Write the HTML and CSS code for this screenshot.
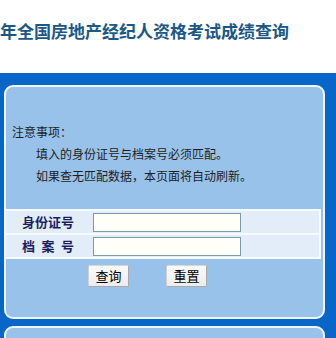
FILE: index.html
```html
<!DOCTYPE html>
<html lang="zh-CN">
<head>
<meta charset="utf-8">
<title>成绩查询</title>
<link rel="stylesheet" href="styles.css">
</head>
<body>
<h1 class="title">年全国房地产经纪人资格考试成绩查询</h1>
<div class="frame">
  <div class="panel">
    <div class="notice">
      <p>注意事项：</p>
      <p class="indent">填入的身份证号与档案号必须匹配。</p>
      <p class="indent">如果查无匹配数据，本页面将自动刷新。</p>
    </div>
    <div class="form">
      <div class="row">
        <div class="label"><span class="label-text">身份证号</span></div>
        <div class="field"><input class="input" type="text"></div>
      </div>
      <div class="row">
        <div class="label"><span class="label-text">档 案 号</span></div>
        <div class="field"><input class="input" type="text"></div>
      </div>
    </div>
    <div class="actions">
      <button class="btn" type="button">查询</button>
      <button class="btn" type="button">重置</button>
    </div>
  </div>
  <div class="panel panel-next"></div>
</div>
</body>
</html>
```
FILE: styles.css
```css
html, body {
  margin: 0;
  padding: 0;
  background: #ffffff;
  overflow: hidden;
}
body {
  width: 336px;
  height: 338px;
  font-family: "Noto Sans CJK SC", sans-serif;
}
.title {
  margin: 0;
  height: 73px;
  box-sizing: border-box;
  padding-top: 21px;
  font-size: 17px;
  line-height: 20px;
  font-weight: bold;
  color: #1b5888;
  white-space: nowrap;
}
.frame {
  background: #0866c8;
  padding: 12px 11px 0 4px;
  height: 265px;
  box-sizing: border-box;
}
.panel {
  height: 234px;
  box-sizing: border-box;
  background: #99c2ea;
  border: 2px solid #eef5fd;
  border-radius: 9px;
}
.panel-next {
  margin-top: 7px;
  height: 100px;
  border-radius: 9px 9px 0 0;
}
.notice {
  padding: 34px 0 0 6px;
  font-size: 12px;
  line-height: 22px;
  color: #1e1e1e;
}
.notice p {
  margin: 0;
}
.notice .indent {
  padding-left: 24px;
}
.form {
  margin: 22px 2px 0 0;
  background: #f6f9fd;
  padding: 2px 2px 2px 0;
  display: flex;
  flex-direction: column;
  gap: 2px;
}
.row {
  display: flex;
  align-items: center;
  height: 22px;
  background: #e2edf9;
}
.label {
  width: 84px;
  display: flex;
  justify-content: center;
}
.label-text {
  display: block;
  width: 52px;
  font-size: 13px;
  line-height: 16px;
  font-weight: bold;
  color: #1b1f62;
  text-align: justify;
  text-align-last: justify;
  white-space: nowrap;
}
.field {
  padding-left: 3px;
  display: flex;
  align-items: center;
}
.input {
  width: 148px;
  height: 19px;
  box-sizing: border-box;
  margin: 1px 0 0 0;
  padding: 0 2px;
  border: 1px solid #7b9aa6;
  background: #fffef9;
  font-size: 12px;
}
.actions {
  display: flex;
  gap: 37px;
  padding: 6px 0 0 82px;
}
.btn {
  width: 41px;
  height: 22px;
  box-sizing: border-box;
  padding: 0;
  margin: 0;
  font-family: "Noto Sans CJK SC", sans-serif;
  font-size: 13px;
  line-height: 18px;
  color: #000;
  background: linear-gradient(#fbfbfb, #ececec);
  border: 1px solid #a9a9a9;
  border-top-color: #d8d8d8;
  border-left-color: #d0d0d0;
  border-radius: 2px;
}
```
